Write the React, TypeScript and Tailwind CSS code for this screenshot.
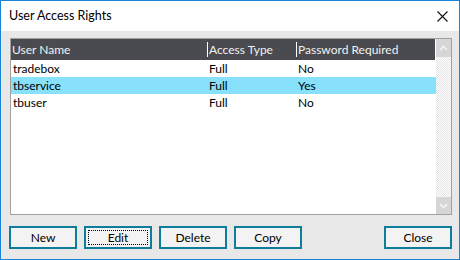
const users = [
  { name: 'tradebox', access: 'Full', password: 'No', selected: false },
  { name: 'tbservice', access: 'Full', password: 'Yes', selected: true },
  { name: 'tbuser', access: 'Full', password: 'No', selected: false },
]

const buttons = ['New', 'Edit', 'Delete', 'Copy']

function Chevron({ up }: { up?: boolean }) {
  return (
    <svg width="9" height="6" viewBox="0 0 9 6">
      <path
        d={up ? 'M1 5 L4.5 1.5 L8 5' : 'M1 1 L4.5 4.5 L8 1'}
        fill="none"
        stroke="#f4f4f4"
        strokeWidth="1.6"
      />
    </svg>
  )
}

function DialogButton({ label, focused }: { label: string; focused?: boolean }) {
  return (
    <button className="w-[68px] h-[23px] border-2 border-[#107c9c] bg-[#f3f3f3] p-[2px] text-[12px] leading-none text-black">
      <span
        className={`flex h-full w-full items-center justify-center ${focused ? 'border border-dotted border-black' : ''}`}
      >
        {label}
      </span>
    </button>
  )
}

export default function App() {
  return (
    <div className="w-[460px] h-[260px] border border-[#1883d7] bg-[#e8e8e8] flex flex-col font-['Lato',sans-serif] text-[12px] text-black">
      <div className="h-[30px] bg-white flex items-center justify-between pl-[8px] pr-[11px]">
        <span className="text-[12.5px]">User Access Rights</span>
        <svg width="11" height="11" viewBox="0 0 11 11">
          <path d="M0.5 0.5 L10.5 10.5 M10.5 0.5 L0.5 10.5" stroke="#111" strokeWidth="1.1" />
        </svg>
      </div>

      <div className="flex-1 pt-[7px] px-[8px]">
        <div className="ml-[1px] w-[442px] h-[177px] border border-[#a0a0a0] bg-white flex">
          <div className="flex-1 flex flex-col">
            <div className="h-[21px] bg-[#4a4b50] text-[#f2f2f2] grid grid-cols-[196px_89px_1fr] items-center border-r border-white">
              <span className="pl-[1px]">User Name</span>
              <span className="flex items-center">
                <span className="w-px h-[15px] bg-white mr-[1px]" />
                Access Type
              </span>
              <span className="flex items-center">
                <span className="w-px h-[15px] bg-white mr-[1px]" />
                Password Required
              </span>
            </div>
            {users.map((u) => (
              <div
                key={u.name}
                className={`h-[17px] grid grid-cols-[196px_89px_1fr] items-center ${u.selected ? 'bg-[#87e1fb]' : ''}`}
              >
                <span className="pl-[2px]">{u.name}</span>
                <span className="pl-[2px]">{u.access}</span>
                <span className="pl-[2px]">{u.password}</span>
              </div>
            ))}
          </div>
          <div className="w-[15px] flex flex-col bg-[repeating-conic-gradient(#e4e4e4_0%_25%,#ffffff_0%_50%)] bg-[length:2px_2px]">
            <div className="h-[18px] bg-[#d6d6d6] flex items-center justify-center">
              <Chevron up />
            </div>
            <div className="flex-1" />
            <div className="h-[17px] bg-[#d6d6d6] flex items-center justify-center">
              <Chevron />
            </div>
          </div>
        </div>

        <div className="mt-[11px] flex">
          <div className="flex gap-[7px]">
            {buttons.map((b) => (
              <DialogButton key={b} label={b} focused={b === 'Edit'} />
            ))}
          </div>
          <div className="ml-auto mr-[-1px]">
            <DialogButton label="Close" />
          </div>
        </div>
      </div>
    </div>
  )
}
